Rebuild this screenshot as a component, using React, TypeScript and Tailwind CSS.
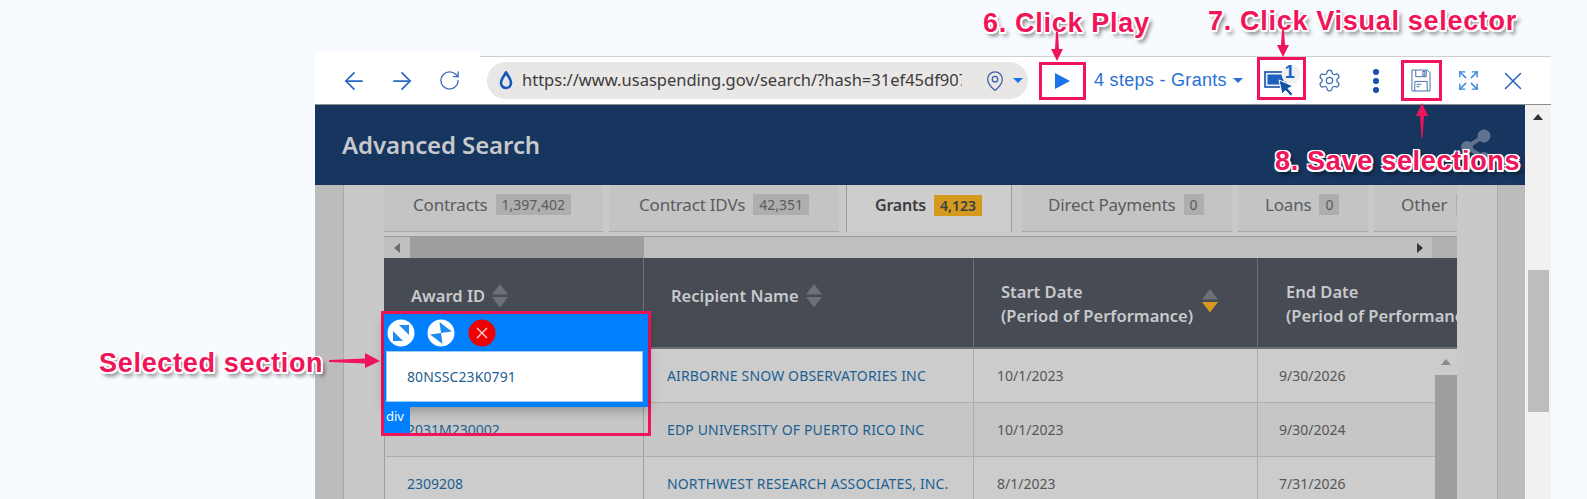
import { ArrowLeft, ArrowRight, RotateCw, MapPin, Settings, Expand, X } from "lucide-react";

const sans = "font-['Noto_Sans',sans-serif]";
const note =
  "absolute font-['Liberation_Sans',sans-serif] font-bold text-[27px] tracking-[0.7px] text-[#f0145a] whitespace-nowrap [text-shadow:-1.5px_-1.5px_0_#fff,1.5px_-1.5px_0_#fff,-1.5px_1.5px_0_#fff,1.5px_1.5px_0_#fff,0_2px_0_#fff,2px_0_0_#fff,3px_4px_4px_rgba(0,0,0,0.6)]";

function Sort({ active = false, className = "" }: { active?: boolean; className?: string }) {
  return (
    <svg width="16" height="24" viewBox="0 0 16 24" className={`shrink-0 ${className}`}>
      <polygon points="8,0 16,10.5 0,10.5" fill="#6d7076" />
      <polygon points="0,13 16,13 8,23.5" fill={active ? "#d39a1e" : "#6d7076"} />
    </svg>
  );
}

function Tab({ label, count, w, pl, active = false, ml = 0 }: { label: string; count: string; w: string; pl: string; active?: boolean; ml?: number }) {
  return (
    <div
      className={`${w} ${pl} h-[47px] shrink-0 flex items-center gap-[8px] pb-[7px] ${
        active
          ? "bg-[#cdcdcd] font-semibold text-[#3b3d40] border-r border-l border-[#9c9c9c]"
          : "bg-[#c4c4c4] text-[#5a5c5f] border-b border-[#a8a8a8]"
      }`}
      style={{ marginLeft: ml }}
    >
      <span className={`${active ? "text-[16px]" : "text-[17px]"} tracking-[-0.2px]`}>{label}</span>
      <span
        className={`h-[21px] px-[6px] flex items-center text-[14px] ${
          active ? "bg-[#d39a1e] text-[#3b3d40] font-semibold" : "bg-[#aeaeae] text-[#5a5c5f]"
        }`}
      >
        {count}
      </span>
    </div>
  );
}

function Head({ w, children, sort, pl, active = false, raised = false, gap = "gap-[7px]" }: { w: string; children: React.ReactNode; sort?: boolean; pl: string; active?: boolean; raised?: boolean; gap?: string }) {
  return (
    <div className={`${w} ${pl} ${raised ? "pb-[13px]" : "pt-[3px]"} shrink-0 h-full flex items-center ${gap} border-r border-[#6e7178] text-[16.5px] font-semibold text-[#c9cacc] leading-[24px] whitespace-nowrap overflow-hidden`}>
      <div>{children}</div>
      {sort && <Sort active={active} className={raised ? "" : "-mt-[6px]"} />}
    </div>
  );
}

function Row({ id, name, a, b, bg, h }: { id: string; name: string; a: string; b: string; bg: string; h: string }) {
  return (
    <div className={`${bg} ${h} flex items-center text-[14px] border-b border-[#adadad]`}>
      <div className="w-[260px] pl-[22px] text-[#1d5f90] border-l border-r border-[#a0a0a0] h-full flex items-center">{id}</div>
      <div className="w-[330px] pl-[23px] text-[#1d5f90] border-r border-[#adadad] h-full flex items-center tracking-[0.15px]">{name}</div>
      <div className="w-[284px] pl-[23px] text-[#55575a] border-r border-[#adadad] h-full flex items-center">{a}</div>
      <div className="flex-1 pl-[21px] text-[#55575a] h-full flex items-center">{b}</div>
    </div>
  );
}

function Arrow({ points, className }: { points: string; className: string }) {
  return (
    <svg className={`absolute overflow-visible ${className}`} width="1" height="1">
      <polygon points={points} fill="#f0145a" />
    </svg>
  );
}

export default function App() {
  return (
    <div className={`relative w-[1587px] h-[499px] overflow-hidden bg-[#f7fbff] pl-[315px] pt-[52px] ${sans}`}>
      <div className="w-[1236px]">
        {/* tab strip */}
        <div className="flex h-[5px]">
          <div className="w-[165px] bg-white" />
          <div className="flex-1 border-b border-[#cfcfcf]" />
        </div>

        {/* toolbar */}
        <div className="h-[47px] bg-white flex items-center text-[#2a66c4] relative">
          <ArrowLeft size={28} strokeWidth={1.5} className="ml-[25px] shrink-0" />
          <ArrowRight size={28} strokeWidth={1.5} className="ml-[20px] shrink-0" />
          <RotateCw size={23} strokeWidth={1.4} className="ml-[22px] shrink-0 text-[#3d6fb8]" />
          <div className="ml-[26px] w-[541px] h-[37px] rounded-full bg-[#e9e6e6] flex items-center shrink-0">
            <svg width="14" height="19" viewBox="0 0 14 19" className="ml-[12px] shrink-0">
              <path d="M7 1.5 C9 5 12 8 12 12 A5 5 0 0 1 2 12 C2 8 5 5 7 1.5 Z" fill="none" stroke="#1557b8" strokeWidth="2.6" />
            </svg>
            <div className="ml-[9px] w-[440px] overflow-hidden whitespace-nowrap text-[16.5px] text-[#3c3c3c]">
              https://www.usaspending.gov/search/?hash=31ef45df907a
            </div>
            <MapPin size={22} strokeWidth={1.4} className="ml-[22px] shrink-0 text-[#3d5fa8]" />
            <div className="ml-[7px] w-0 h-0 border-x-[5px] border-x-transparent border-t-[5px] border-t-[#1a73e8]" />
          </div>
          <div className="ml-[11px] w-[47px] h-[38px] border-[3px] border-[#f0145a] flex items-center justify-center shrink-0">
            <div className="w-0 h-0 border-y-[8px] border-y-transparent border-l-[15px] border-l-[#1a73e8]" />
          </div>
          <span className="ml-[8px] text-[18px] tracking-[0.3px] text-[#2a6fd6] font-['Liberation_Sans',sans-serif] whitespace-nowrap">4 steps - Grants</span>
          <div className="ml-[6px] w-0 h-0 border-x-[5px] border-x-transparent border-t-[5px] border-t-[#2a6fd6]" />
          <div className="ml-[14px] -mt-[5px] w-[49px] h-[43px] border-[3px] border-[#f0145a] relative shrink-0">
            <svg width="38" height="34" viewBox="0 0 38 34" className="absolute left-[4px] top-[4px]">
              <rect x="1" y="8" width="21" height="15" fill="#eaf1fb" stroke="#1450a8" strokeWidth="1.6" />
              <rect x="3.5" y="10.5" width="16" height="10" fill="#1e5fc0" />
              <polygon points="15,16 29,22 24,24.5 29,30 26.5,32 21.5,26.5 18,30" fill="#1450a8" stroke="#fff" strokeWidth="1" />
              <circle cx="27" cy="10" r="9.5" fill="#f0f0f0" />
            </svg>
            <span className="absolute left-[25px] top-[-1px] text-[18px] font-bold text-[#1a63cf] font-['Liberation_Sans',sans-serif]">1</span>
          </div>
          <Settings size={25} strokeWidth={1.2} className="ml-[11px] shrink-0 text-[#3f6fb0]" />
          <div className="ml-[31px] flex flex-col gap-[3px] shrink-0">
            <div className="w-[6px] h-[6px] rounded-full bg-[#1450a8]" />
            <div className="w-[6px] h-[6px] rounded-full bg-[#1450a8]" />
            <div className="w-[6px] h-[6px] rounded-full bg-[#1450a8]" />
          </div>
          <div className="ml-[22px] w-[41px] h-[41px] border-[3px] border-[#f0145a] flex items-center justify-center shrink-0">
            <svg width="20" height="23" viewBox="0 0 21 24" fill="none" stroke="#3f69ad" strokeWidth="1">
              <path d="M1 1 H17 L20 4 V23 H1 Z" />
              <path d="M5 1 V8 H16 V1" />
              <rect x="12.5" y="2.5" width="2" height="4" />
              <path d="M4 23 V13 H17 V23" />
              <path d="M6 16 H11 M6 18.5 H9" />
            </svg>
          </div>
          <Expand size={23} strokeWidth={1.5} className="ml-[15px] shrink-0 text-[#3b8ade]" />
          <X size={30} strokeWidth={1.3} className="ml-[18px] shrink-0 text-[#2a66c4]" />
        </div>

        {/* page */}
        <div className="flex h-[395px] border-t border-[#8e8e8e]">
          <div className="w-[1210px] shrink-0 overflow-hidden">
            <div className="h-[80px] bg-[#16355f] flex items-center pl-[27px]">
              <span className="text-[24px] font-semibold text-[#c7c9cc] tracking-[-0.1px]">Advanced Search</span>
              <svg width="30" height="36" viewBox="0 0 30 36" className="ml-auto mr-[34px] mt-[2px]">
                <path d="M6 19 L23 8 M6 19 L23 30" stroke="#5f7391" strokeWidth="4" />
                <circle cx="23" cy="8" r="6.5" fill="#5f7391" />
                <circle cx="6" cy="19" r="6" fill="#5f7391" />
                <circle cx="23" cy="30" r="6" fill="#5f7391" />
              </svg>
            </div>
            <div className="flex h-[314px] bg-[#c9c9c9]">
              <div className="w-[29px] bg-[#bcbcbc] border-r border-[#a8a8a8]" />
              <div className="w-[40px]" />
              <div className="w-[1073px] shrink-0 overflow-hidden">
                {/* tabs */}
                <div className="flex h-[47px]">
                  <Tab label="Contracts" count="1,397,402" w="w-[219px]" pl="pl-[29px]" />
                  <Tab label="Contract IDVs" count="42,351" w="w-[230px]" pl="pl-[30px]" ml={6} />
                  <Tab label="Grants" count="4,123" w="w-[166px]" pl="pl-[28px]" active ml={7} />
                  <Tab label="Direct Payments" count="0" w="w-[210px]" pl="pl-[26px]" ml={10} />
                  <Tab label="Loans" count="0" w="w-[130px]" pl="pl-[27px]" ml={6} />
                  <div className="ml-[6px] w-[83px] h-[47px] shrink-0 bg-[#c4c4c4] flex items-center gap-[8px] pl-[27px] pb-[7px] text-[#5a5c5f] border-b border-[#a8a8a8] overflow-hidden">
                    <span className="text-[17px]">Other</span>
                    <span className="w-[20px] h-[21px] shrink-0 bg-[#aeaeae]" />
                  </div>
                </div>
                {/* h-scrollbar */}
                <div className="mt-[4px] h-[22px] flex items-center bg-[#c0c0c0] border-t border-[#9a9a9a]">
                  <div className="w-[26px] h-full flex items-center justify-center">
                    <div className="w-0 h-0 border-y-[5px] border-y-transparent border-r-[6px] border-r-[#6e6e6e]" />
                  </div>
                  <div className="w-[234px] h-full bg-[#9e9e9e]" />
                  <div className="flex-1" />
                  <div className="w-0 h-0 border-y-[5px] border-y-transparent border-l-[6px] border-l-[#333] mr-[9px]" />
                  <div className="w-[25px] h-full bg-[#b0b0b0]" />
                </div>
                {/* head */}
                <div className="h-[91px] bg-[#474b54] flex border-b-2 border-[#6e7178]">
                  <Head w="w-[260px]" pl="pl-[27px]" sort raised>Award ID</Head>
                  <Head w="w-[330px]" pl="pl-[27px]" sort raised>Recipient Name</Head>
                  <Head w="w-[284px]" pl="pl-[27px]" sort active gap="gap-[9px]">
                    Start Date<br />(Period of Performance)
                  </Head>
                  <div className="flex-1 pl-[28px] pt-[3px] h-full flex items-center text-[16.5px] font-semibold text-[#c9cacc] leading-[24px] whitespace-nowrap overflow-hidden">
                    <div>End Date<br />(Period of Performance)</div>
                  </div>
                </div>
                {/* rows */}
                <div className="flex">
                  <div className="flex-1 min-w-0">
                    <Row id="80NSSC23K0791" name="AIRBORNE SNOW OBSERVATORIES INC" a="10/1/2023" b="9/30/2026" bg="bg-[#cccccc]" h="h-[54px]" />
                    <Row id="2031M230002" name="EDP UNIVERSITY OF PUERTO RICO INC" a="10/1/2023" b="9/30/2024" bg="bg-[#c6c6c6]" h="h-[54px]" />
                    <Row id="2309208" name="NORTHWEST RESEARCH ASSOCIATES, INC." a="8/1/2023" b="7/31/2026" bg="bg-[#cccccc]" h="h-[54px]" />
                  </div>
                  <div className="w-[22px] shrink-0 bg-[#cccccc] flex flex-col items-center">
                    <div className="h-[26px] flex items-center">
                      <div className="w-0 h-0 border-x-[5px] border-x-transparent border-b-[6px] border-b-[#8a8a8a]" />
                    </div>
                    <div className="w-full h-[200px] bg-[#9e9e9e]" />
                  </div>
                </div>
              </div>
              <div className="w-[41px] border-r border-[#a8a8a8]" />
              <div className="flex-1 bg-[#bcbcbc]" />
            </div>
          </div>
          {/* page scrollbar */}
          <div className="flex-1 bg-[#f1f1f1] flex flex-col items-center">
            <div className="mt-[9px] w-0 h-0 border-x-[5px] border-x-transparent border-b-[6px] border-b-[#333]" />
            <div className="mt-[150px] w-[21px] h-[142px] bg-[#bdbdbd]" />
          </div>
        </div>
      </div>

      {/* selection overlay */}
      <div className="absolute left-[381px] top-[311px] w-[270px] h-[125px] border-[3px] border-[#f0145a]">
        <div className="h-[93px] bg-[#0080ff] shadow-[0_4px_10px_rgba(0,0,0,0.25)] flex flex-col">
          <div className="h-[37px] flex items-center pl-[3px]">
            <svg width="28" height="28" viewBox="0 0 28 28">
              <circle cx="14" cy="14" r="13.5" fill="#fff" />
              <polygon points="12,6 22,6 22,16" fill="#1e8cf0" />
              <polygon points="6,12 16,22 6,22" fill="#1e8cf0" />
            </svg>
            <svg width="28" height="28" viewBox="0 0 28 28" className="ml-[12px]">
              <circle cx="14" cy="14" r="13.5" fill="#fff" />
              <polygon points="14,14 14,3 25,14" fill="#1e8cf0" transform="rotate(-8 14 14)" />
              <polygon points="14,14 14,25 3,14" fill="#1e8cf0" transform="rotate(-8 14 14)" />
            </svg>
            <svg width="28" height="28" viewBox="0 0 28 28" className="ml-[13px]">
              <circle cx="14" cy="14" r="13.5" fill="#f00000" />
              <path d="M9 9 L19 19 M19 9 L9 19" stroke="#ffd9d9" strokeWidth="1.3" />
            </svg>
          </div>
          <div className="ml-[2px] mr-[5px] h-[51px] bg-white border border-[#9cc8f5] flex items-center pl-[20px] text-[14px] text-[#1d5f90] tracking-[0.1px]">
            80NSSC23K0791
          </div>
        </div>
        <div className="w-[26px] h-[26px] bg-[#0080ff] text-white text-[13px] pl-[2px] leading-[18px]">div</div>
      </div>

      {/* annotations */}
      <div className={`${note} left-[983px] top-[3px]`}>6. Click Play</div>
      <div className={`${note} left-[1208px] top-[1px]`}>7. Click Visual selector</div>
      <div className={`${note} left-[1275px] top-[141px]`}>8. Save selections</div>
      <div className={`${note} left-[99px] top-[343px]`}>Selected section</div>

      <Arrow className="left-[1057px] top-[32px]" points="-1,0 1,0 2,17 6,17 0,29 -6,17 -2,17" />
      <Arrow className="left-[1283px] top-[30px]" points="-1,0 1,0 2,15 6,15 0,27 -6,15 -2,15" />
      <Arrow className="left-[1422px] top-[103px]" points="0,0 6,13 2,13 0.5,35 -0.5,35 -2,13 -6,13" />
      <Arrow className="left-[329px] top-[361px]" points="0,-1 36,-2.5 36,-8 51,0 36,7 36,2.5 0,1" />
    </div>
  );
}
